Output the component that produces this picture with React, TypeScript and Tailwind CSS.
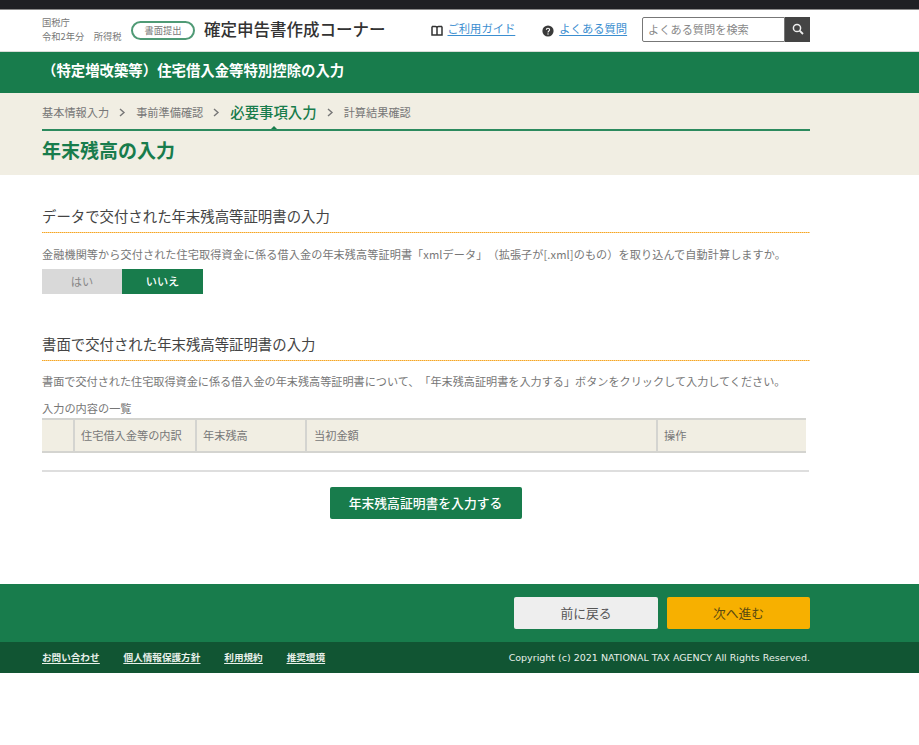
import React from "react";

const font = { fontFamily: '"Noto Sans CJK JP", "Noto Sans", sans-serif' };

function Chevron() {
  return (
    <svg width="7" height="9" viewBox="0 0 7 9" className="mx-[10px] shrink-0">
      <path d="M1 1l4 3.5L1 8" fill="none" stroke="#777" strokeWidth="1.4" />
    </svg>
  );
}

function DottedRule() {
  return <div className="h-[1px] bg-[repeating-linear-gradient(90deg,#f5a623_0_1px,#fbd08a_1px_2px)]" />;
}

export default function App() {
  return (
    <div style={font} className="w-[919px] h-[745px] bg-white overflow-hidden text-[#555] [text-spacing-trim:space-all]">
      <div className="h-[10px] bg-[#1f2024] border-b border-[#8a8a8a]" />

      <header className="h-[42px] border-b border-[#d8dcd8] pl-[42px]">
        <div className="w-[768px] h-full flex items-center whitespace-nowrap">
          <div className="w-[89px] shrink-0 text-[9.3px] leading-[14px] text-[#777] -mt-[3px]">
            <div>国税庁</div>
            <div>令和2年分　所得税</div>
          </div>
          <span className="w-[64px] h-[19px] shrink-0 rounded-full border-2 border-[#4f9a75] text-[9.3px] text-[#777] flex items-center justify-center">
            書面提出
          </span>
          <span className="ml-[9px] text-[16.5px] font-medium text-[#333] -mt-[3px]">確定申告書作成コーナー</span>
          <svg width="12" height="11" viewBox="0 0 12 11" className="ml-[45px] shrink-0">
            <path d="M1 1.5h3.5Q6 1.5 6 3v7M11 1.5H7.5Q6 1.5 6 3M1 1.5V10h10V1.5" fill="none" stroke="#333" strokeWidth="1.5" />
          </svg>
          <a className="ml-[5px] text-[11.3px] text-[#3b8ed0] underline underline-offset-2 -mt-[4px]">ご利用ガイド</a>
          <svg width="12" height="12" viewBox="0 0 12 12" className="ml-[27px] shrink-0">
            <circle cx="6" cy="6" r="5.6" fill="#3a3a3a" />
            <path d="M4.4 4.8Q4.4 3.2 6 3.2t1.6 1.5C7.6 6 6 6 6 7.4" fill="none" stroke="#fff" strokeWidth="1.1" />
            <circle cx="6" cy="9" r=".7" fill="#fff" />
          </svg>
          <a className="ml-[5px] text-[11.3px] text-[#3b8ed0] underline underline-offset-2 -mt-[4px]">よくある質問</a>
          <div className="ml-[15px] flex h-[25px] -mt-[3px] shrink-0">
            <div className="w-[143px] border border-[#777] rounded-l-[2px] px-[5px] text-[11.2px] leading-[22px] text-[#888]">よくある質問を検索</div>
            <div className="w-[25px] bg-[#444] flex items-center justify-center">
              <svg width="12" height="12" viewBox="0 0 12 12">
                <circle cx="5" cy="5" r="3.6" fill="none" stroke="#eee" strokeWidth="1.5" />
                <path d="M7.6 7.6L11 11" stroke="#eee" strokeWidth="1.8" />
              </svg>
            </div>
          </div>
        </div>
      </header>

      <div className="h-[41px] bg-[#187c4c] pl-[42px] pb-[5px] flex items-center">
        <div className="text-[14.4px] font-bold text-white whitespace-nowrap">（特定増改築等）住宅借入金等特別控除の入力</div>
      </div>

      <section className="h-[82px] bg-[#f1eee3] pl-[42px]">
        <div className="w-[768px]">
          <nav className="h-[38px] border-b-2 border-[#2c8a5e] flex items-center text-[11.2px] text-[#777] relative whitespace-nowrap pt-[2px]">
            <span>基本情報入力</span>
            <Chevron />
            <span>事前準備確認</span>
            <Chevron />
            <span className="text-[14.4px] font-medium text-[#187c4c]">必要事項入力</span>
            <Chevron />
            <span>計算結果確認</span>
            <span className="absolute left-[229px] bottom-0 w-0 h-0 border-x-[3px] border-x-transparent border-b-[3px] border-b-[#187c4c]" />
          </nav>
          <h1 className="text-[19px] font-bold text-[#187c4c] leading-[38px]">年末残高の入力</h1>
        </div>
      </section>

      <main className="pl-[42px] h-[409px]">
        <div className="w-[768px] pt-[31px]">
          <h2 className="text-[14.4px] font-normal text-[#444] leading-[20px] h-[26px]">データで交付された年末残高等証明書の入力</h2>
          <DottedRule />
          <p className="mt-[13px] text-[11.13px] tracking-[0.09px] leading-[16px] text-[#777] whitespace-nowrap">金融機関等から交付された住宅取得資金に係る借入金の年末残高等証明書「xmlデータ」（拡張子が[.xml]のもの）を取り込んで自動計算しますか。</p>
          <div className="mt-[7px] flex h-[25px] text-[11.2px] leading-[25px] text-center">
            <span className="w-[80px] bg-[#d9d9d9] text-[#888]">はい</span>
            <span className="w-[81px] bg-[#187c4c] text-white font-medium">いいえ</span>
          </div>

          <h2 className="mt-[40px] text-[14.4px] font-normal text-[#444] leading-[20px] h-[26px]">書面で交付された年末残高等証明書の入力</h2>
          <DottedRule />
          <p className="mt-[12px] text-[11.13px] leading-[16px] text-[#777] whitespace-nowrap">書面で交付された住宅取得資金に係る借入金の年末残高等証明書について、「年末残高証明書を入力する」ボタンをクリックして入力してください。</p>
          <p className="mt-[12px] text-[11.2px] leading-[14px] text-[#777] whitespace-nowrap">入力の内容の一覧</p>

          <table className="mt-[3px] w-[764px] h-[35px] table-fixed border-y-2 border-[#d4d4d0] bg-[#f1eee3] text-[11.2px] text-[#777] text-left">
            <thead>
              <tr>
                <th className="w-[32px] font-normal" />
                <th className="w-[122px] font-normal border-l-2 border-[#d4d4d0] pl-[6px] whitespace-nowrap">住宅借入金等の内訳</th>
                <th className="w-[110px] font-normal border-l-2 border-[#d4d4d0] pl-[6px]">年末残高</th>
                <th className="w-[351px] font-normal border-l-2 border-[#d4d4d0] pl-[7px]">当初金額</th>
                <th className="font-normal border-l-2 border-[#d4d4d0] pl-[6px]">操作</th>
              </tr>
            </thead>
          </table>

          <div className="mt-[17px] w-[767px] border-t-2 border-[#dedede]" />
          <div className="mt-[15px] flex justify-center -ml-[1px]">
            <button className="w-[192px] h-[32px] bg-[#187c4c] rounded-[2px] text-white text-[12.8px] font-medium">年末残高証明書を入力する</button>
          </div>
        </div>
      </main>

      <footer>
        <div className="h-[58px] bg-[#187c4c] pl-[42px] flex items-center">
          <div className="w-[768px] flex justify-end gap-[9px] -mt-[1px]">
            <button className="w-[144px] h-[32px] bg-[#eeeeee] rounded-[2px] text-[12.8px] text-[#555]">前に戻る</button>
            <button className="w-[143px] h-[32px] bg-[#f7b000] rounded-[2px] text-[12.8px] text-[#5a4a10]">次へ進む</button>
          </div>
        </div>
        <div className="h-[31px] bg-[#115533] pl-[42px] flex items-center">
          <div className="w-[768px] flex justify-between items-center text-[9.6px] text-[#e8f0ea] font-bold whitespace-nowrap">
            <div className="flex gap-[24px] underline underline-offset-2">
              <a>お問い合わせ</a>
              <a>個人情報保護方針</a>
              <a>利用規約</a>
              <a>推奨環境</a>
            </div>
            <span className="text-[9.5px] font-normal pt-[1px]" style={{ fontFamily: '"DejaVu Sans", sans-serif' }}>Copyright (c) 2021 NATIONAL TAX AGENCY All Rights Reserved.</span>
          </div>
        </div>
      </footer>
    </div>
  );
}
